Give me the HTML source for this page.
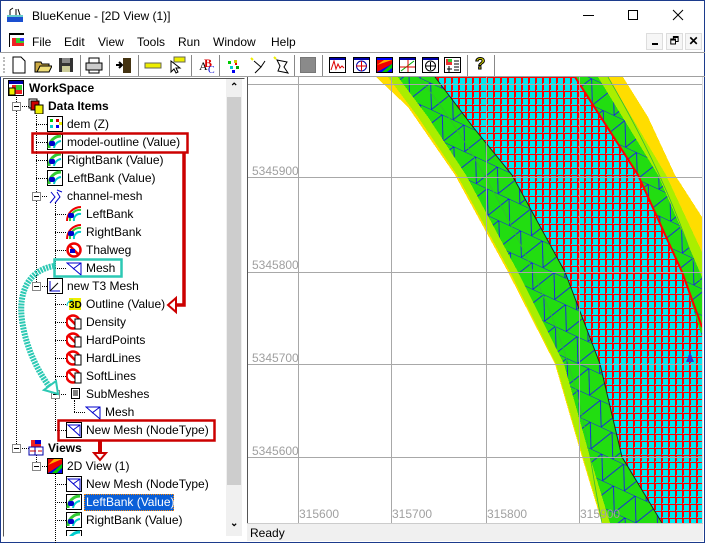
<!DOCTYPE html>
<html><head><meta charset="utf-8"><style>
*{margin:0;padding:0;box-sizing:border-box}
body{width:705px;height:543px;overflow:hidden;background:#fff;font-family:"Liberation Sans",sans-serif;font-size:12px;color:#000;position:relative}
.a{position:absolute}
.win{position:absolute;left:0;top:0;width:705px;height:543px;border:1px solid #1c3b8c}
.t{position:absolute;white-space:nowrap;font-size:12px;line-height:14px}
.b{font-weight:bold}
.ic{position:absolute;width:16px;height:16px}
.dv{position:absolute;border-left:1px dotted #000}
.dh{position:absolute;border-top:1px dotted #000}
.ex{position:absolute;width:9px;height:9px;border:1px solid #888;background:#fff}
.ex:after{content:"";position:absolute;left:1px;top:3px;width:5px;height:1px;background:#000}
.tb{position:absolute;top:56px;width:18px;height:18px}
.sep{position:absolute;top:55px;width:1px;height:21px;background:#888}
</style></head><body>
<div class="win"></div>
<svg class="a" style="left:6px;top:6px" width="18" height="18"><rect x="1" y="11" width="16" height="5" fill="#1a4fd0"/><rect x="1" y="9" width="16" height="2" fill="#6cc"/><path d="M4 9V4M4 4l3-2M10 9V3M14 9l-2-6" stroke="#000" fill="none"/></svg>
<div class="t" style="left:32px;top:9px;font-size:12px">BlueKenue - [2D View (1)]</div>
<div class="a" style="left:583px;top:15px;width:11px;height:1px;background:#000"></div>
<div class="a" style="left:628px;top:10px;width:10px;height:10px;border:1px solid #000"></div>
<svg class="a" style="left:672px;top:9px" width="12" height="12"><path d="M1 1L11 11M11 1L1 11" stroke="#000"/></svg>
<svg class="a" style="left:9px;top:33px" width="16" height="14"><rect x="0" y="0" width="15" height="2" fill="#000"/><rect x="0" y="2" width="1" height="12" fill="#000"/><rect x="3" y="5" width="12" height="8" fill="#e22"/><rect x="7" y="5" width="8" height="5" fill="#3c3"/><rect x="11" y="5" width="4" height="3" fill="#33f"/></svg>
<div class="t" style="left:32px;top:35px">File</div>
<div class="t" style="left:64px;top:35px">Edit</div>
<div class="t" style="left:98px;top:35px">View</div>
<div class="t" style="left:137px;top:35px">Tools</div>
<div class="t" style="left:178px;top:35px">Run</div>
<div class="t" style="left:213px;top:35px">Window</div>
<div class="t" style="left:271px;top:35px">Help</div>
<div class="a" style="left:646px;top:33px;width:17px;height:17px;border:1px solid #ddd;background:#f6f6f6"></div><div class="a" style="left:652px;top:43px;width:6px;height:2px;background:#000"></div>
<div class="a" style="left:666px;top:33px;width:17px;height:17px;border:1px solid #ddd;background:#f6f6f6;font-size:10px;text-align:center;line-height:15px">🗗</div>
<div class="a" style="left:685px;top:33px;width:17px;height:17px;border:1px solid #ddd;background:#f6f6f6;font-weight:bold;text-align:center;line-height:15px;font-size:12px">✕</div>
<div class="a" style="left:0;top:52px;width:705px;height:1px;background:#a0a0a0"></div>
<div class="a" style="left:0;top:53px;width:495px;height:24px;background:#fff"></div>
<div class="a" style="left:3px;top:57px;width:2px;height:16px;border-left:2px dotted #bbb"></div>
<svg class="tb" style="left:10px"><path d="M3 1h8l4 4v12H3z" fill="#fff" stroke="#000"/></svg>
<svg class="tb" style="left:34px"><path d="M1 6h6l1 2h7v8H1z" fill="#ccaa44" stroke="#000"/><path d="M3 16l3-6h12l-3 6z" fill="#eedd77" stroke="#000"/></svg>
<svg class="tb" style="left:57px"><rect x="2" y="2" width="14" height="14" fill="#333"/><rect x="5" y="2" width="8" height="5" fill="#888"/><rect x="5" y="10" width="8" height="6" fill="#cc9"/></svg>
<div class="sep" style="left:80px"></div>
<svg class="tb" style="left:85px"><rect x="1" y="7" width="16" height="7" fill="#ccc" stroke="#000"/><rect x="4" y="2" width="10" height="5" fill="#fff" stroke="#000"/><rect x="4" y="14" width="10" height="3" fill="#fff" stroke="#000"/></svg>
<div class="sep" style="left:109px"></div>
<svg class="tb" style="left:115px"><rect x="8" y="2" width="8" height="15" fill="#443311"/><path d="M1 9h6M4 6l3 3-3 3" stroke="#000" stroke-width="2" fill="none"/></svg>
<div class="sep" style="left:138px"></div>
<svg class="tb" style="left:144px"><rect x="1" y="7" width="16" height="5" fill="#ee0" stroke="#665"/></svg>
<svg class="tb" style="left:168px"><rect x="6" y="1" width="11" height="5" fill="#ee0" stroke="#665"/><path d="M3 5v11l3-3 2 4 2-1-2-4h4z" fill="#fff" stroke="#000"/></svg>
<div class="sep" style="left:191px"></div>
<svg class="tb" style="left:197px"><text x="2" y="14" font-size="12" font-family="Liberation Serif" fill="#000">A</text><text x="7" y="11" font-size="12" font-weight="bold" font-family="Liberation Serif" fill="#d00">B</text><text x="11" y="17" font-size="10" font-family="Liberation Serif" fill="#00c">C</text></svg>
<div class="sep" style="left:219px"></div>
<svg class="tb" style="left:224px"><rect x="4" y="5" width="3" height="3" fill="#0c0"/><rect x="10" y="4" width="3" height="3" fill="#cc0"/><rect x="6" y="10" width="3" height="3" fill="#0cc"/><rect x="12" y="10" width="3" height="3" fill="#0a0"/><rect x="8" y="14" width="3" height="3" fill="#00e"/><rect x="11" y="7" width="2" height="2" fill="#e00"/></svg>
<svg class="tb" style="left:249px"><path d="M5 5l7 6-6 6M12 11l4-6" stroke="#000" fill="none"/><path d="M2 2l2 2" stroke="#ee0" stroke-width="2"/></svg>
<svg class="tb" style="left:273px"><path d="M4 4l10 2-3 5 4 6-10-2 2-5z" stroke="#000" fill="none"/><path d="M1 1l2 2" stroke="#ee0" stroke-width="2"/></svg>
<div class="sep" style="left:294px"></div>
<div class="a" style="left:300px;top:57px;width:16px;height:16px;background:#8a8a8a;border:1px solid #777"></div>
<div class="sep" style="left:322px"></div>
<svg class="tb" style="left:329px"><rect x="0.5" y="1.5" width="16" height="15" fill="#fff" stroke="#000"/><rect x="1" y="2" width="15" height="2" fill="#00a"/><path d="M2 14l3-9 2 8 2-5 2 4 2-2 2 2" stroke="#d00" fill="none"/></svg>
<svg class="tb" style="left:353px"><rect x="0.5" y="1.5" width="16" height="15" fill="#fff" stroke="#000"/><rect x="1" y="2" width="15" height="2" fill="#00a"/><circle cx="8.5" cy="10" r="5" stroke="#00a" fill="none"/><path d="M3 10h11M8.5 5v10" stroke="#d00"/></svg>
<svg class="tb" style="left:376px"><rect x="0.5" y="1.5" width="16" height="15" fill="#00f" stroke="#000"/><path d="M1 4h15v4L1 16z" fill="#e00"/><path d="M6 16l10-8v4l-5 4z" fill="#0c0"/><path d="M1 9l7-5h8z" fill="#fa0"/></svg>
<svg class="tb" style="left:399px"><rect x="0.5" y="1.5" width="16" height="15" fill="#fff" stroke="#000"/><rect x="1" y="2" width="15" height="2" fill="#00a"/><path d="M2 15L15 5" stroke="#0a0"/><path d="M1 11h15M9 4v12" stroke="#d00"/></svg>
<svg class="tb" style="left:422px"><rect x="0.5" y="1.5" width="16" height="15" fill="#fff" stroke="#000"/><rect x="1" y="2" width="15" height="2" fill="#00a"/><circle cx="8.5" cy="10" r="5" stroke="#000" fill="none"/><path d="M4 10h9M8.5 6v8" stroke="#000"/></svg>
<svg class="tb" style="left:444px"><rect x="0.5" y="1.5" width="16" height="15" fill="#fff" stroke="#000"/><rect x="2" y="3" width="6" height="6" fill="#e33"/><rect x="4" y="3" width="4" height="3" fill="#3c3"/><path d="M10 5h5M10 8h5M10 11h5M10 14h5M3 13h5M5 10v6" stroke="#000"/></svg>
<div class="sep" style="left:467px"></div>
<div class="a" style="left:475px;top:54px;font-weight:bold;font-size:17px;color:#dd0;-webkit-text-stroke:1px #000">?</div>
<div class="sep" style="left:494px"></div>
<div class="a" style="left:0;top:76px;width:705px;height:1px;background:#a0a0a0"></div>
<div class="a" style="left:3px;top:78px;width:242px;height:459px;border:1px solid #000;border-color:#555 #fff #fff #555;background:#fff"></div>
<div class="a" style="left:226px;top:79px;width:16px;height:457px;background:#f0f0f0"></div>
<div class="a" style="left:227px;top:97px;width:14px;height:388px;background:#cdcdcd"></div>
<div class="a" style="left:230px;top:82px;font-size:10px;font-weight:bold">⌃</div>
<div class="a" style="left:230px;top:518px;font-size:10px;font-weight:bold">⌄</div>

<div class="dv" style="left:16px;top:94px;height:356px"></div>
<div class="dv" style="left:36px;top:112px;height:174px"></div>
<div class="dv" style="left:55px;top:202px;height:66px"></div>
<div class="dv" style="left:55px;top:292px;height:138px"></div>
<div class="dv" style="left:74px;top:400px;height:12px"></div>
<div class="dv" style="left:36px;top:454px;height:12px"></div>
<div class="dv" style="left:55px;top:472px;height:71px"></div>
<div class="dh" style="left:16px;top:106px;width:13px"></div>
<div class="dh" style="left:16px;top:448px;width:13px"></div>
<div class="dh" style="left:36px;top:124px;width:11px"></div><div class="dh" style="left:36px;top:142px;width:11px"></div><div class="dh" style="left:36px;top:160px;width:11px"></div><div class="dh" style="left:36px;top:178px;width:11px"></div><div class="dh" style="left:36px;top:196px;width:11px"></div><div class="dh" style="left:36px;top:286px;width:11px"></div><div class="dh" style="left:36px;top:466px;width:11px"></div>
<div class="dh" style="left:55px;top:214px;width:11px"></div><div class="dh" style="left:55px;top:232px;width:11px"></div><div class="dh" style="left:55px;top:250px;width:11px"></div><div class="dh" style="left:55px;top:268px;width:11px"></div>
<div class="dh" style="left:55px;top:304px;width:11px"></div><div class="dh" style="left:55px;top:322px;width:11px"></div><div class="dh" style="left:55px;top:340px;width:11px"></div><div class="dh" style="left:55px;top:358px;width:11px"></div><div class="dh" style="left:55px;top:376px;width:11px"></div><div class="dh" style="left:55px;top:394px;width:11px"></div><div class="dh" style="left:55px;top:430px;width:11px"></div>
<div class="dh" style="left:74px;top:412px;width:11px"></div>
<div class="dh" style="left:55px;top:484px;width:11px"></div><div class="dh" style="left:55px;top:502px;width:11px"></div><div class="dh" style="left:55px;top:520px;width:11px"></div>
<div class="ex" style="left:12px;top:102px"></div>
<div class="ex" style="left:12px;top:444px"></div>
<div class="ex" style="left:32px;top:192px"></div>
<div class="ex" style="left:32px;top:282px"></div>
<div class="ex" style="left:32px;top:462px"></div>
<div class="ex" style="left:51px;top:390px"></div>

<svg class="ic" style="left:8px;top:80px"><rect x="0.5" y="0.5" width="15" height="15" fill="#fff" stroke="#000"/><rect x="1" y="1" width="14" height="3" fill="#00a"/><rect x="4" y="5" width="10" height="9" fill="#e22"/><rect x="8" y="5" width="6" height="5" fill="#3c3"/><rect x="1" y="8" width="6" height="7" fill="#ee0" stroke="#000"/></svg>
<svg class="ic" style="left:28px;top:98px"><rect x="1" y="1" width="8" height="9" fill="#fff" stroke="#000"/><rect x="3" y="3" width="8" height="9" fill="#c00" stroke="#000"/><rect x="7" y="7" width="8" height="9" fill="#ee0" stroke="#000"/></svg>
<svg class="ic" style="left:47px;top:116px"><rect x="0.5" y="0.5" width="15" height="15" fill="#fff" stroke="#000"/><rect x="3" y="3" width="3" height="3" fill="#0c0"/><rect x="9" y="3" width="3" height="3" fill="#c00"/><rect x="3" y="9" width="3" height="3" fill="#0cc"/><rect x="9" y="9" width="3" height="3" fill="#00e"/><rect x="12" y="6" width="3" height="3" fill="#ee0"/></svg>
<svg class="ic" style="left:47px;top:134px"><rect x="0.5" y="0.5" width="15" height="15" fill="#fff" stroke="#000"/><path d="M2 14A12 12 0 0 1 14 2" stroke="#3c3" stroke-width="3" fill="none"/><path d="M7 14A8 8 0 0 1 14 7" stroke="#0cc" stroke-width="2" fill="none"/><rect x="2" y="7" width="6" height="5" rx="2" fill="#00c"/></svg>
<svg class="ic" style="left:47px;top:152px"><rect x="0.5" y="0.5" width="15" height="15" fill="#fff" stroke="#000"/><path d="M2 14A12 12 0 0 1 14 2" stroke="#3c3" stroke-width="3" fill="none"/><path d="M7 14A8 8 0 0 1 14 7" stroke="#0cc" stroke-width="2" fill="none"/><rect x="2" y="7" width="6" height="5" rx="2" fill="#00c"/></svg>
<svg class="ic" style="left:47px;top:170px"><rect x="0.5" y="0.5" width="15" height="15" fill="#fff" stroke="#000"/><path d="M2 14A12 12 0 0 1 14 2" stroke="#3c3" stroke-width="3" fill="none"/><path d="M7 14A8 8 0 0 1 14 7" stroke="#0cc" stroke-width="2" fill="none"/><rect x="2" y="7" width="6" height="5" rx="2" fill="#00c"/></svg>
<svg class="ic" style="left:47px;top:188px"><path d="M3 15l5-6-4-5M8 15l5-6-3-5M10 2l5 2" stroke="#00c" fill="none"/></svg>
<svg class="ic" style="left:66px;top:206px"><path d="M1 15A14 14 0 0 1 15 1" stroke="#e00" stroke-width="2" fill="none"/><path d="M4 15A10 10 0 0 1 15 4" stroke="#3c3" stroke-width="2" fill="none"/><path d="M8 15A6 6 0 0 1 15 8" stroke="#0cc" stroke-width="2" fill="none"/><rect x="2" y="7" width="6" height="5" rx="2" fill="#00c"/></svg>
<svg class="ic" style="left:66px;top:224px"><path d="M1 15A14 14 0 0 1 15 1" stroke="#e00" stroke-width="2" fill="none"/><path d="M4 15A10 10 0 0 1 15 4" stroke="#3c3" stroke-width="2" fill="none"/><path d="M8 15A6 6 0 0 1 15 8" stroke="#0cc" stroke-width="2" fill="none"/><rect x="2" y="7" width="6" height="5" rx="2" fill="#00c"/></svg>
<svg class="ic" style="left:66px;top:242px"><circle cx="8" cy="8" r="6.5" stroke="#e00" stroke-width="2.5" fill="none"/><path d="M3 3l10 10" stroke="#e00" stroke-width="2.5"/><rect x="4" y="7" width="5" height="4" fill="#00c"/></svg>
<svg class="ic" style="left:66px;top:260px"><path d="M1 3h14v12z" fill="none" stroke="#00c"/><path d="M15 3L7 9" stroke="#00c"/></svg>
<svg class="ic" style="left:47px;top:278px"><rect x="0.5" y="0.5" width="15" height="15" fill="#fff" stroke="#000"/><path d="M3 3v10h10" stroke="#00c" fill="none"/><path d="M3 13l8-8" stroke="#000"/></svg>
<svg class="ic" style="left:66px;top:296px"><rect x="3" y="2" width="12" height="12" fill="#ee0"/><text x="3" y="12" font-size="10" font-weight="bold" fill="#000">3D</text><path d="M1 10A6 6 0 0 1 7 4" stroke="#0cc" fill="none"/></svg>
<svg class="ic" style="left:66px;top:314px"><circle cx="7" cy="8" r="6.5" stroke="#e00" stroke-width="2.5" fill="none"/><path d="M2 3l10 10" stroke="#e00" stroke-width="2.5"/><rect x="9" y="5" width="6" height="10" fill="#fff" stroke="#000"/></svg>
<svg class="ic" style="left:66px;top:332px"><circle cx="7" cy="8" r="6.5" stroke="#e00" stroke-width="2.5" fill="none"/><path d="M2 3l10 10" stroke="#e00" stroke-width="2.5"/><rect x="9" y="5" width="6" height="10" fill="#fff" stroke="#000"/></svg>
<svg class="ic" style="left:66px;top:350px"><circle cx="7" cy="8" r="6.5" stroke="#e00" stroke-width="2.5" fill="none"/><path d="M2 3l10 10" stroke="#e00" stroke-width="2.5"/><rect x="9" y="5" width="6" height="10" fill="#fff" stroke="#000"/></svg>
<svg class="ic" style="left:66px;top:368px"><circle cx="7" cy="8" r="6.5" stroke="#e00" stroke-width="2.5" fill="none"/><path d="M2 3l10 10" stroke="#e00" stroke-width="2.5"/><rect x="9" y="5" width="6" height="10" fill="#fff" stroke="#000"/></svg>
<svg class="ic" style="left:70px;top:386px"><rect x="1.5" y="2.5" width="8" height="10" fill="#fff" stroke="#000"/><path d="M3 5h5M3 7h5M3 9h5" stroke="#000"/></svg>
<svg class="ic" style="left:85px;top:404px"><path d="M1 3h14v12z" fill="none" stroke="#00c"/><path d="M15 3L7 9" stroke="#00c"/></svg>
<svg class="ic" style="left:66px;top:422px"><rect x="0.5" y="0.5" width="15" height="15" fill="#fff" stroke="#000"/><path d="M2 3h12v11z" fill="none" stroke="#00c"/><path d="M14 3L7 8" stroke="#00c"/></svg>
<svg class="ic" style="left:28px;top:440px"><rect x="3" y="0" width="10" height="8" fill="#e22"/><rect x="7" y="0" width="6" height="4" fill="#00c"/><rect x="1" y="7" width="8" height="8" fill="#fff" stroke="#00a"/><rect x="7" y="7" width="8" height="8" fill="#fff" stroke="#00a"/><path d="M2 11h6M10 11h4" stroke="#c00"/></svg>
<svg class="ic" style="left:47px;top:458px"><rect x="0.5" y="0.5" width="15" height="15" fill="#00e" stroke="#000"/><path d="M1 1h14v5L1 15z" fill="#e00"/><path d="M5 15l10-9v4l-5 5z" fill="#0c0"/><path d="M1 7l6-6h8z" fill="#fa0"/></svg>
<svg class="ic" style="left:66px;top:476px"><rect x="0.5" y="0.5" width="15" height="15" fill="#fff" stroke="#000"/><path d="M2 3h12v11z" fill="none" stroke="#00c"/><path d="M14 3L7 8" stroke="#00c"/></svg>
<svg class="ic" style="left:66px;top:494px"><rect x="0.5" y="0.5" width="15" height="15" fill="#fff" stroke="#000"/><path d="M2 14A12 12 0 0 1 14 2" stroke="#3c3" stroke-width="3" fill="none"/><path d="M7 14A8 8 0 0 1 14 7" stroke="#0cc" stroke-width="2" fill="none"/><rect x="2" y="7" width="6" height="5" rx="2" fill="#00c"/></svg>
<svg class="ic" style="left:66px;top:512px"><rect x="0.5" y="0.5" width="15" height="15" fill="#fff" stroke="#000"/><path d="M2 14A12 12 0 0 1 14 2" stroke="#3c3" stroke-width="3" fill="none"/><path d="M7 14A8 8 0 0 1 14 7" stroke="#0cc" stroke-width="2" fill="none"/><rect x="2" y="7" width="6" height="5" rx="2" fill="#00c"/></svg>
<svg class="ic" style="left:66px;top:530px;height:6px"><rect x="0.5" y="0.5" width="15" height="15" fill="#fff" stroke="#000"/><path d="M2 14A12 12 0 0 1 14 2" stroke="#0cc" stroke-width="3" fill="none"/></svg>

<div class="t b" style="left:29px;top:81px">WorkSpace</div>
<div class="t b" style="left:48px;top:99px">Data Items</div>
<div class="t" style="left:67px;top:117px">dem (Z)</div>
<div class="t" style="left:67px;top:135px">model-outline (Value)</div>
<div class="t" style="left:67px;top:153px">RightBank (Value)</div>
<div class="t" style="left:67px;top:171px">LeftBank (Value)</div>
<div class="t" style="left:67px;top:189px">channel-mesh</div>
<div class="t" style="left:86px;top:207px">LeftBank</div>
<div class="t" style="left:86px;top:225px">RightBank</div>
<div class="t" style="left:86px;top:243px">Thalweg</div>
<div class="t" style="left:86px;top:261px">Mesh</div>
<div class="t" style="left:67px;top:279px">new T3 Mesh</div>
<div class="t" style="left:86px;top:297px">Outline (Value)</div>
<div class="t" style="left:86px;top:315px">Density</div>
<div class="t" style="left:86px;top:333px">HardPoints</div>
<div class="t" style="left:86px;top:351px">HardLines</div>
<div class="t" style="left:86px;top:369px">SoftLines</div>
<div class="t" style="left:86px;top:387px">SubMeshes</div>
<div class="t" style="left:105px;top:405px">Mesh</div>
<div class="t" style="left:86px;top:423px">New Mesh (NodeType)</div>
<div class="t b" style="left:48px;top:441px">Views</div>
<div class="t" style="left:67px;top:459px">2D View (1)</div>
<div class="t" style="left:86px;top:477px">New Mesh (NodeType)</div>
<div class="a" style="left:84px;top:494px;width:90px;height:17px;background:#0a5fd8;border:1px dotted #f80"></div>
<div class="t" style="left:86px;top:495px;color:#fff">LeftBank (Value)</div>
<div class="t" style="left:86px;top:513px">RightBank (Value)</div>

<svg class="a" style="left:0;top:0" width="249" height="537">
<rect x="32.5" y="133.5" width="155" height="19" fill="none" stroke="#c00" stroke-width="2.5"/>
<path d="M184 153V305H176" stroke="#c00" stroke-width="3.5" fill="none"/>
<path d="M176 298l-8 7 8 7z" fill="#fff" stroke="#c00" stroke-width="2"/>
<rect x="54.5" y="259.5" width="67" height="17" fill="none" stroke="#2cc9b4" stroke-width="2.5"/>
<path d="M54 266C30 270 18 290 22 320C26 350 40 375 52 390" stroke="#2cc9b4" stroke-width="6" fill="none" stroke-dasharray="2 1"/>
<path d="M44 390l14 4 -2-13z" fill="#fff" stroke="#2cc9b4" stroke-width="2"/>
<rect x="58.5" y="420.5" width="156" height="20" fill="none" stroke="#c00" stroke-width="2.5"/>
<path d="M100 441v12" stroke="#c00" stroke-width="4"/>
<path d="M94 453h12l-6 7z" fill="#fff" stroke="#c00" stroke-width="2"/>
</svg>

<svg class="a" style="left:248px;top:77px" width="454" height="446" shape-rendering="crispEdges">
<defs>
<pattern id="rm" width="7" height="7" patternUnits="userSpaceOnUse">
<rect width="7" height="7" fill="#00e8f0"/><path d="M0.5 0V7M0 0.5H7M1.5 1V6" stroke="#f00" stroke-width="1"/></pattern>
<pattern id="bm" width="24" height="24" patternUnits="userSpaceOnUse" patternTransform="rotate(25)">
<path d="M0 0H24M0 0L12 24M24 0L12 24" stroke="#1a1aee" stroke-width="1" fill="none"/></pattern>
</defs>
<rect width="454" height="446" fill="#fff"/>
<path d="M128 0L160 30 207 98 260 195 307 287 334 380 354 446H454V0Z" fill="#ffdd00"/>
<path d="M375 0L400 40 427 98 454 140V0Z" fill="#fff"/>
<path d="M140 0L170 40 209 98 262 195 308 287 335 380 355 446H454V175L418 98 360 0Z" fill="#aaee00"/>
<path d="M150 0L180 40 218 98 270 195 316 287 342 380 362 446H454V200L410 98 350 0Z" fill="#22dd11"/>
<path d="M150 0L180 40 218 98 270 195 316 287 342 380 362 446H454V200L410 98 350 0Z" fill="url(#bm)" shape-rendering="auto"/>
<path d="M170 0C205 40 260 130 300 230S340 380 354 446" fill="none" stroke="#33bb33" stroke-width="0.8" shape-rendering="auto"/>
<path d="M360 0C395 60 430 130 454 210" fill="none" stroke="#33bb33" stroke-width="0.8" shape-rendering="auto"/>
<path d="M187 0L225 50 264 98 317 195 352 287 374 380 414 446H454V260L434 195 390 98 327 0Z" fill="url(#rm)"/>
<path d="M187 0L225 50 264 98 317 195 352 287 374 380 414 446" fill="none" stroke="#222" stroke-width="1" shape-rendering="auto"/>
<path d="M327 0L390 98 434 195 454 250" fill="none" stroke="#f00" stroke-width="2" shape-rendering="auto"/>
<path d="M438 285l4-10 4 10z" fill="#33c"/>
<g stroke="#a8a8a8" stroke-width="1">
<path d="M50.5 0V446M143.5 0V446M238.5 0V446M331.5 0V446"/>
<path d="M0 7.5H454M0 100.5H454M0 195.5H454M0 287.5H454M0 380.5H454"/>
</g>
<g fill="#a0a0a0" font-size="12" font-family="Liberation Sans">
<text x="4" y="98">5345900</text><text x="4" y="192">5345800</text><text x="4" y="285">5345700</text><text x="4" y="378">5345600</text>
<text x="51" y="441">315600</text><text x="144" y="441">315700</text><text x="239" y="441">315800</text><text x="332" y="441">315900</text>
</g>
</svg>
<div class="a" style="left:247px;top:77px;width:1px;height:446px;background:#555"></div>
<div class="a" style="left:702px;top:77px;width:1px;height:446px;background:#ddd"></div>
<div class="a" style="left:247px;top:523px;width:456px;height:18px;background:#f0f0f0;border-top:1px solid #ccc"></div>
<div class="t" style="left:250px;top:526px">Ready</div>
</body></html>
